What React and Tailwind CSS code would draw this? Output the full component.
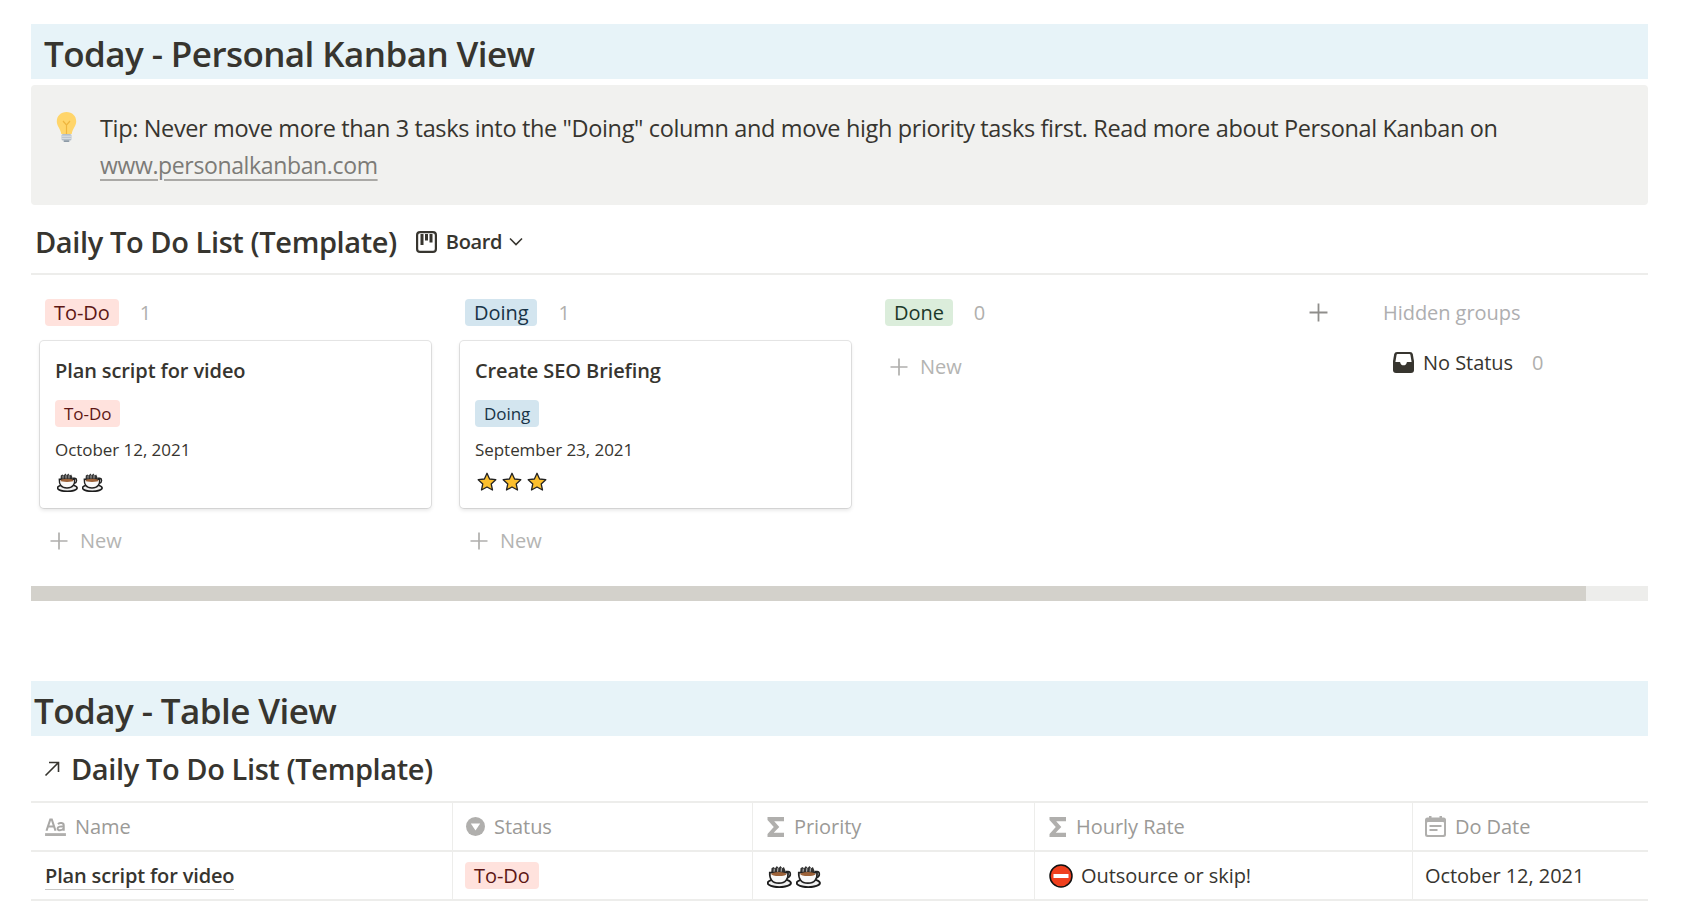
import React from "react";

const Coffee = ({ className }) => (
  <svg viewBox="0 0 21 20" className={className}>
    <path d="M3.500 7.500L3.800 3.500l1.600-1 1.400 1 1.500-2 1.500 1.800 1.500-1.800 1.500 2 1.400-1 1.100 2.500.2 2.500z" fill="#333" />
    <path d="M6 7C5.600 5.800 6.400 5 6 3.800M9 7C8.600 5.500 9.400 4.700 9 3.300M12 7c-.4-1.500.4-2.300 0-3.700" fill="none" stroke="#bbb" strokeWidth=".9" />
    <path d="M15.500 6.200h2.300c2.300.2 2.600 4-.4 5.200l-3.200 1.600" fill="none" stroke="#222" strokeWidth="1.400" />
    <ellipse cx="10.300" cy="15.900" rx="9.800" ry="3.500" fill="#f1f1f1" stroke="#1c1c1c" strokeWidth="1.600" />
    <path d="M2.300 7.200h15.400c.3 5.200-1.900 8.800-7.700 8.800S2 12.400 2.300 7.200z" fill="#f9f9f9" stroke="#222" strokeWidth="1.400" />
    <ellipse cx="10" cy="8.400" rx="6.500" ry="1.700" fill="#9c6239" />
  </svg>
);

const Star = ({ className }) => (
  <svg viewBox="0 0 20 20" className={className}>
    <path d="M10 1.300l2.600 5.700 6.200.7-4.600 4.200 1.300 6.100L10 15l-5.500 3 1.300-6.100-4.600-4.200 6.200-.7z" fill="#fcbf2d" stroke="#222" strokeWidth="1.300" strokeLinejoin="round" />
  </svg>
);

const NoEntry = ({ className }) => (
  <svg viewBox="0 0 24 24" className={className}>
    <circle cx="12" cy="12" r="11" fill="#f0401e" stroke="#111" strokeWidth="1.500" />
    <rect x="4.500" y="10" width="15" height="4" fill="#fff" />
  </svg>
);

const Bulb = ({ className }) => (
  <svg viewBox="0 0 21 30" className={className}>
    <path d="M10.500 0C4.800 0 .8 4 .8 9.300c0 5 3.500 6.800 4.500 12.700h10.400c1-5.900 4.500-7.700 4.500-12.700C20.200 4 16.200 0 10.500 0z" fill="#ffd56a" />
    <path d="M7 9l3.500 4L14 9M10.500 13v9" fill="none" stroke="#efb63f" strokeWidth="1.200" />
    <rect x="5.500" y="22" width="10" height="6.500" rx="1.500" fill="#b4bfca" />
    <path d="M5.500 24.200h10M5.500 26.300h10" stroke="#dfe4e8" strokeWidth="1" />
    <rect x="7.500" y="28.200" width="6" height="1.800" rx=".9" fill="#8d9aa6" />
  </svg>
);

const Plus = ({ className }) => (
  <svg viewBox="0 0 18 18" className={className}>
    <path d="M9 0.500v17M0.500 9h17" stroke="currentColor" strokeWidth="1.700" fill="none" />
  </svg>
);

const BoardIcon = ({ className }) => (
  <svg viewBox="0 0 21 22" className={className}>
    <rect x="1.100" y="1.100" width="18.800" height="19.800" rx="3" fill="none" stroke="#37352f" strokeWidth="2.200" />
    <path d="M6 3v11M10.500 3v6.500M15 3v8.500" stroke="#37352f" strokeWidth="3" fill="none" />
  </svg>
);

const Chevron = ({ className }) => (
  <svg viewBox="0 0 14 9" className={className}>
    <path d="M1 1.500l6 6 6-6" fill="none" stroke="#37352f" strokeWidth="1.600" />
  </svg>
);

const Inbox = ({ className }) => (
  <svg viewBox="0 0 21 21" className={className}>
    <path d="M4 0h13c1.500 0 2.400.8 2.800 2.200L21 9v9c0 2-1 3-3 3H3c-2 0-3-1-3-3V9l1.200-6.800C1.600.8 2.500 0 4 0z" fill="#37352f" />
    <path d="M4.500 2h12c.5 0 .8.300.9.700L18.600 10h-3.900c-.7 0-1 .4-1.100 1-.3 1.400-1.500 2.300-3.100 2.300S7.700 12.400 7.400 11c-.1-.6-.4-1-1.100-1H2.400l1.200-7.300c.1-.4.400-.7.900-.7z" fill="#fff" />
  </svg>
);

const ArrowNE = ({ className }) => (
  <svg viewBox="0 0 16 16" className={className}>
    <path d="M5 1.500h9.500V11M14.500 1.500L1.500 14.500" fill="none" stroke="#37352f" strokeWidth="1.600" />
  </svg>
);

const AaIcon = ({ className }) => (
  <svg viewBox="0 0 22 19" className={className}>
    <path d="M1.500 13.500L5.500 1.500h1.600L11 13.500M3 9h6.500" fill="none" stroke="#a9a8a6" strokeWidth="2.200" />
    <path d="M13.500 6.300c2.500-1.700 6.200-1.300 6.200 1.500V13.500M19.700 9c-2.800-.4-6.500 0-6.500 2.200 0 2.300 4.500 2.400 6.500-.4" fill="none" stroke="#a9a8a6" strokeWidth="2.100" />
    <rect x="0" y="16" width="22" height="3" fill="#b0afad" />
  </svg>
);

const StatusIcon = ({ className }) => (
  <svg viewBox="0 0 19 19" className={className}>
    <circle cx="9.500" cy="9.500" r="9.500" fill="#b0afad" />
    <path d="M4.800 6.500h9.400L9.500 13.500z" fill="#fff" />
  </svg>
);

const Sigma = ({ className }) => (
  <svg viewBox="0 0 18 20" className={className}>
    <path d="M0.500 0h16.500v4.200h-9.800L12.300 10 6.700 15.800H17V20H0.500v-3L6.800 10 .5 3z" fill="#b0afad" />
  </svg>
);

const Calendar = ({ className }) => (
  <svg viewBox="0 0 21 21" className={className}>
    <rect x="0" y="1.500" width="21" height="19.500" rx="2.500" fill="#b0afad" />
    <rect x="4" y="0" width="2.500" height="3" fill="#b0afad" />
    <rect x="14.500" y="0" width="2.500" height="3" fill="#b0afad" />
    <rect x="2" y="6" width="17" height="13" rx="1" fill="#fff" />
    <rect x="4.500" y="9" width="12" height="2" fill="#b0afad" />
    <rect x="4.500" y="13" width="8" height="2" fill="#b0afad" />
  </svg>
);

const Banner = ({ children, textClass }) => (
  <div className="h-[55px] bg-[#e7f3f8] flex items-center pt-[4px]">
    <h1 className={`text-[35px] font-semibold leading-none tracking-[-0.57px] text-[#37352f] ${textClass}`}>{children}</h1>
  </div>
);

const NewRow = ({ className }) => (
  <div className={`flex items-center h-[40px] pl-[10px] text-[#b4b4b2] text-[20px] ${className}`}>
    <Plus className="w-[18px] h-[18px] mr-[12px] text-[#b0afad]" />
    <span>New</span>
  </div>
);

const Card = ({ title, tag, tagClass, date, children }) => (
  <div className="h-[167px] bg-white rounded-[4px] pl-[15px] shadow-[0_0_0_1px_rgba(15,15,15,0.1),0_2px_4px_rgba(15,15,15,0.12)] flex flex-col">
    <div className="mt-[16px] text-[20px] leading-[28px] font-semibold tracking-[-0.1px] text-[#37352f]">{title}</div>
    <div className="mt-[15px] flex">
      <span className={`h-[27px] px-[9px] rounded-[4px] text-[17px] leading-[27px] ${tagClass}`}>{tag}</span>
    </div>
    <div className="mt-[10px] h-[26px] text-[17px] leading-[26px] text-[#37352f]">{date}</div>
    <div className="mt-[9px] flex gap-[4px] pl-[2px]">{children}</div>
  </div>
);

const Column = ({ pill, pillClass, count, children }) => (
  <div className="w-[391px] shrink-0">
    <div className="flex items-center h-[27px] pl-[5px]">
      <span className={`h-[27px] px-[9px] rounded-[4px] text-[20px] leading-[27px] ${pillClass}`}>{pill}</span>
      <span className="ml-[21px] text-[20px] text-[#b0afad]">{count}</span>
    </div>
    {children}
  </div>
);

const Head = ({ icon, label, first, className = "pl-[14px]" }) => (
  <div className={`h-full flex items-center gap-[9px] text-[20px] text-[#9b9a97] ${first ? "" : "border-l border-[#ededeb]"} ${className}`}>
    {icon}
    <span>{label}</span>
  </div>
);

const Cell = ({ children, first, className = "" }) => (
  <div className={`h-full flex items-center text-[20px] text-[#37352f] ${first ? "" : "border-l border-[#ededeb]"} ${className}`}>
    {children}
  </div>
);

export default function App() {
  return (
    <div className="w-[1697px] h-[905px] overflow-hidden bg-white font-['Open_Sans','Noto_Sans',sans-serif] tracking-[-0.05px] text-[#37352f]">
      <div className="w-[1617px] ml-[31px] pt-[24px]">
        <Banner textClass="pl-[13px]">Today - Personal Kanban View</Banner>

        <div className="mt-[6px] h-[120px] rounded-[4px] bg-[#f1f1ef] flex pl-[25px] pt-[25px]">
          <Bulb className="w-[21px] h-[30px] mt-[2px] shrink-0" />
          <div className="ml-[23px] w-[1460px] text-[23.5px] leading-[37px] tracking-[-0.36px]">
            Tip: Never move more than 3 tasks into the "Doing" column and move high priority tasks first. Read more about Personal Kanban on{" "}
            <span className="text-[23px] text-[#7c7b77] underline decoration-[#aaa9a6] underline-offset-[5px]">www.personalkanban.com</span>
          </div>
        </div>

        <div className="h-[70px] border-b-2 border-[#ededeb] flex items-center pl-[4px] pt-[4px]">
          <h2 className="text-[29px] font-semibold leading-none tracking-[-0.4px] text-[#37352f]">Daily To Do List (Template)</h2>
          <div className="flex items-center mt-[1px]">
            <BoardIcon className="w-[21px] h-[22px] ml-[19px]" />
            <span className="ml-[9px] text-[20px] font-semibold tracking-[-0.35px]">Board</span>
            <Chevron className="w-[14px] h-[9px] ml-[7px]" />
          </div>
        </div>

        <div className="flex pl-[9px] pt-[24px] h-[311px] gap-[29px]">
          <Column pill="To-Do" count="1" pillClass="bg-[#ffe2dd] text-[#5d1715]">
            <div className="mt-[15px]">
              <Card title="Plan script for video" tag="To-Do" tagClass="bg-[#ffe2dd] text-[#5d1715]" date="October 12, 2021">
                <Coffee className="w-[21px] h-[20px]" />
                <Coffee className="w-[21px] h-[20px]" />
              </Card>
            </div>
            <NewRow className="mt-[13px]" />
          </Column>
          <Column pill="Doing" count="1" pillClass="bg-[#d3e5ef] text-[#183347]">
            <div className="mt-[15px]">
              <Card title="Create SEO Briefing" tag="Doing" tagClass="bg-[#d3e5ef] text-[#183347]" date="September 23, 2021">
                <Star className="w-[20px] h-[20px] mr-[1px]" />
                <Star className="w-[20px] h-[20px] mr-[1px]" />
                <Star className="w-[20px] h-[20px]" />
              </Card>
            </div>
            <NewRow className="mt-[13px]" />
          </Column>
          <Column pill="Done" count="0" pillClass="bg-[#dbeddb] text-[#1c3829]">
            <NewRow className="mt-[21px]" />
          </Column>
          <div className="w-[19px] h-[27px] flex items-center ml-[9px]">
            <Plus className="w-[19px] h-[19px] text-[#8f8e8b]" />
          </div>
          <div className="ml-[26px]">
            <div className="h-[27px] leading-[27px] text-[20px] text-[#aeaeb0]">Hidden groups</div>
            <div className="mt-[23px] pl-[10px] flex items-center text-[20px] leading-[27px] text-[#37352f]">
              <Inbox className="w-[21px] h-[21px] mr-[9px]" />
              <span>No Status</span>
              <span className="ml-[19px] text-[#b0afad]">0</span>
            </div>
          </div>
        </div>

        <div className="h-[15px] bg-[#ededeb]">
          <div className="h-full w-[1555px] bg-[#d3d1cb]" />
        </div>

        <div className="mt-[80px]">
          <Banner textClass="pl-[3px]">Today - Table View</Banner>
        </div>

        <div className="h-[65px] flex items-center pl-[13px]">
          <ArrowNE className="w-[16px] h-[16px] mr-[11px]" />
          <h2 className="text-[29px] font-semibold leading-none tracking-[-0.4px] text-[#37352f]">Daily To Do List (Template)</h2>
        </div>

        <div className="grid grid-cols-[421px_300px_282px_378px_236px] grid-rows-[49px_49px] border-t-2 border-[#ededeb]">
          <div className="border-b-2 border-[#ededeb] col-span-5 grid grid-cols-subgrid">
            <Head first icon={<AaIcon className="w-[21px] h-[18px]" />} label="Name" />
            <Head icon={<StatusIcon className="w-[19px] h-[19px]" />} label="Status" className="pl-[13px]" />
            <Head icon={<Sigma className="w-[18px] h-[20px]" />} label="Priority" />
            <Head icon={<Sigma className="w-[18px] h-[20px]" />} label="Hourly Rate" />
            <Head icon={<Calendar className="w-[21px] h-[21px]" />} label="Do Date" className="pl-[12px]" />
          </div>
          <div className="border-b-2 border-[#ededeb] col-span-5 grid grid-cols-subgrid">
            <Cell first className="pl-[14px]">
              <span className="font-semibold tracking-[-0.15px] border-b-[1.5px] border-[#c9c8c5] leading-[27px]">Plan script for video</span>
            </Cell>
            <Cell className="pl-[12px]">
              <span className="h-[27px] px-[9px] rounded-[4px] leading-[27px] bg-[#ffe2dd] text-[#5d1715]">To-Do</span>
            </Cell>
            <Cell className="pl-[14px] gap-[4px]">
              <Coffee className="w-[25px] h-[24px]" />
              <Coffee className="w-[25px] h-[24px]" />
            </Cell>
            <Cell className="pl-[14px]">
              <NoEntry className="w-[24px] h-[24px] mr-[8px]" />
              <span>Outsource or skip!</span>
            </Cell>
            <Cell className="pl-[12px]">October 12, 2021</Cell>
          </div>
        </div>
      </div>
    </div>
  );
}
